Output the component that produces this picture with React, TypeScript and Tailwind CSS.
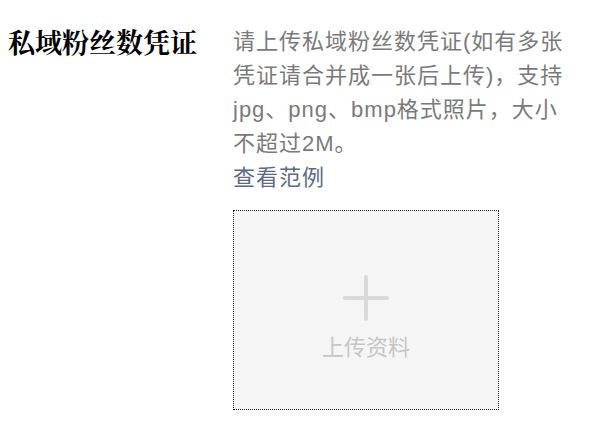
export default function App() {
  return (
    <div className="w-[604px] h-[433px] bg-white flex pt-[25px] pl-[8px]">
      {/* Label */}
      <div
        className="w-[225px] shrink-0 text-[27px] leading-[34px] font-bold text-black"
        style={{ fontFamily: '"Noto Serif CJK SC", "Liberation Serif", "Noto Sans CJK SC", serif' }}
      >
        私域粉丝数凭证
      </div>

      {/* Content */}
      <div className="w-[339px] flex flex-col" style={{ fontFamily: '"Liberation Sans", "Noto Sans CJK SC", sans-serif' }}>
        <p className="text-[22px] leading-[34px] tracking-[1px] text-[#7a7a7a]">
          请上传私域粉丝数凭证(如有多张凭证请合并成一张后上传)，支持jpg、png、bmp格式照片，大小不超过2M。
        </p>
        <a className="text-[22px] leading-[34px] tracking-[1px] text-[#5b6a86] cursor-pointer self-start">查看范例</a>

        <div className="mt-[15px] w-[266px] h-[200px] border border-dotted border-[#222] bg-[#f5f5f5] flex flex-col items-center pt-[64px]">
          <svg width="46" height="46" viewBox="0 0 46 46" className="shrink-0">
            <path d="M23 2v42M2 23h42" stroke="#d9d9d9" strokeWidth="4" strokeLinecap="round" />
          </svg>
          <span className="mt-[13px] text-[22px] leading-[28px] text-[#c6c6c6]">上传资料</span>
        </div>
      </div>
    </div>
  )
}
